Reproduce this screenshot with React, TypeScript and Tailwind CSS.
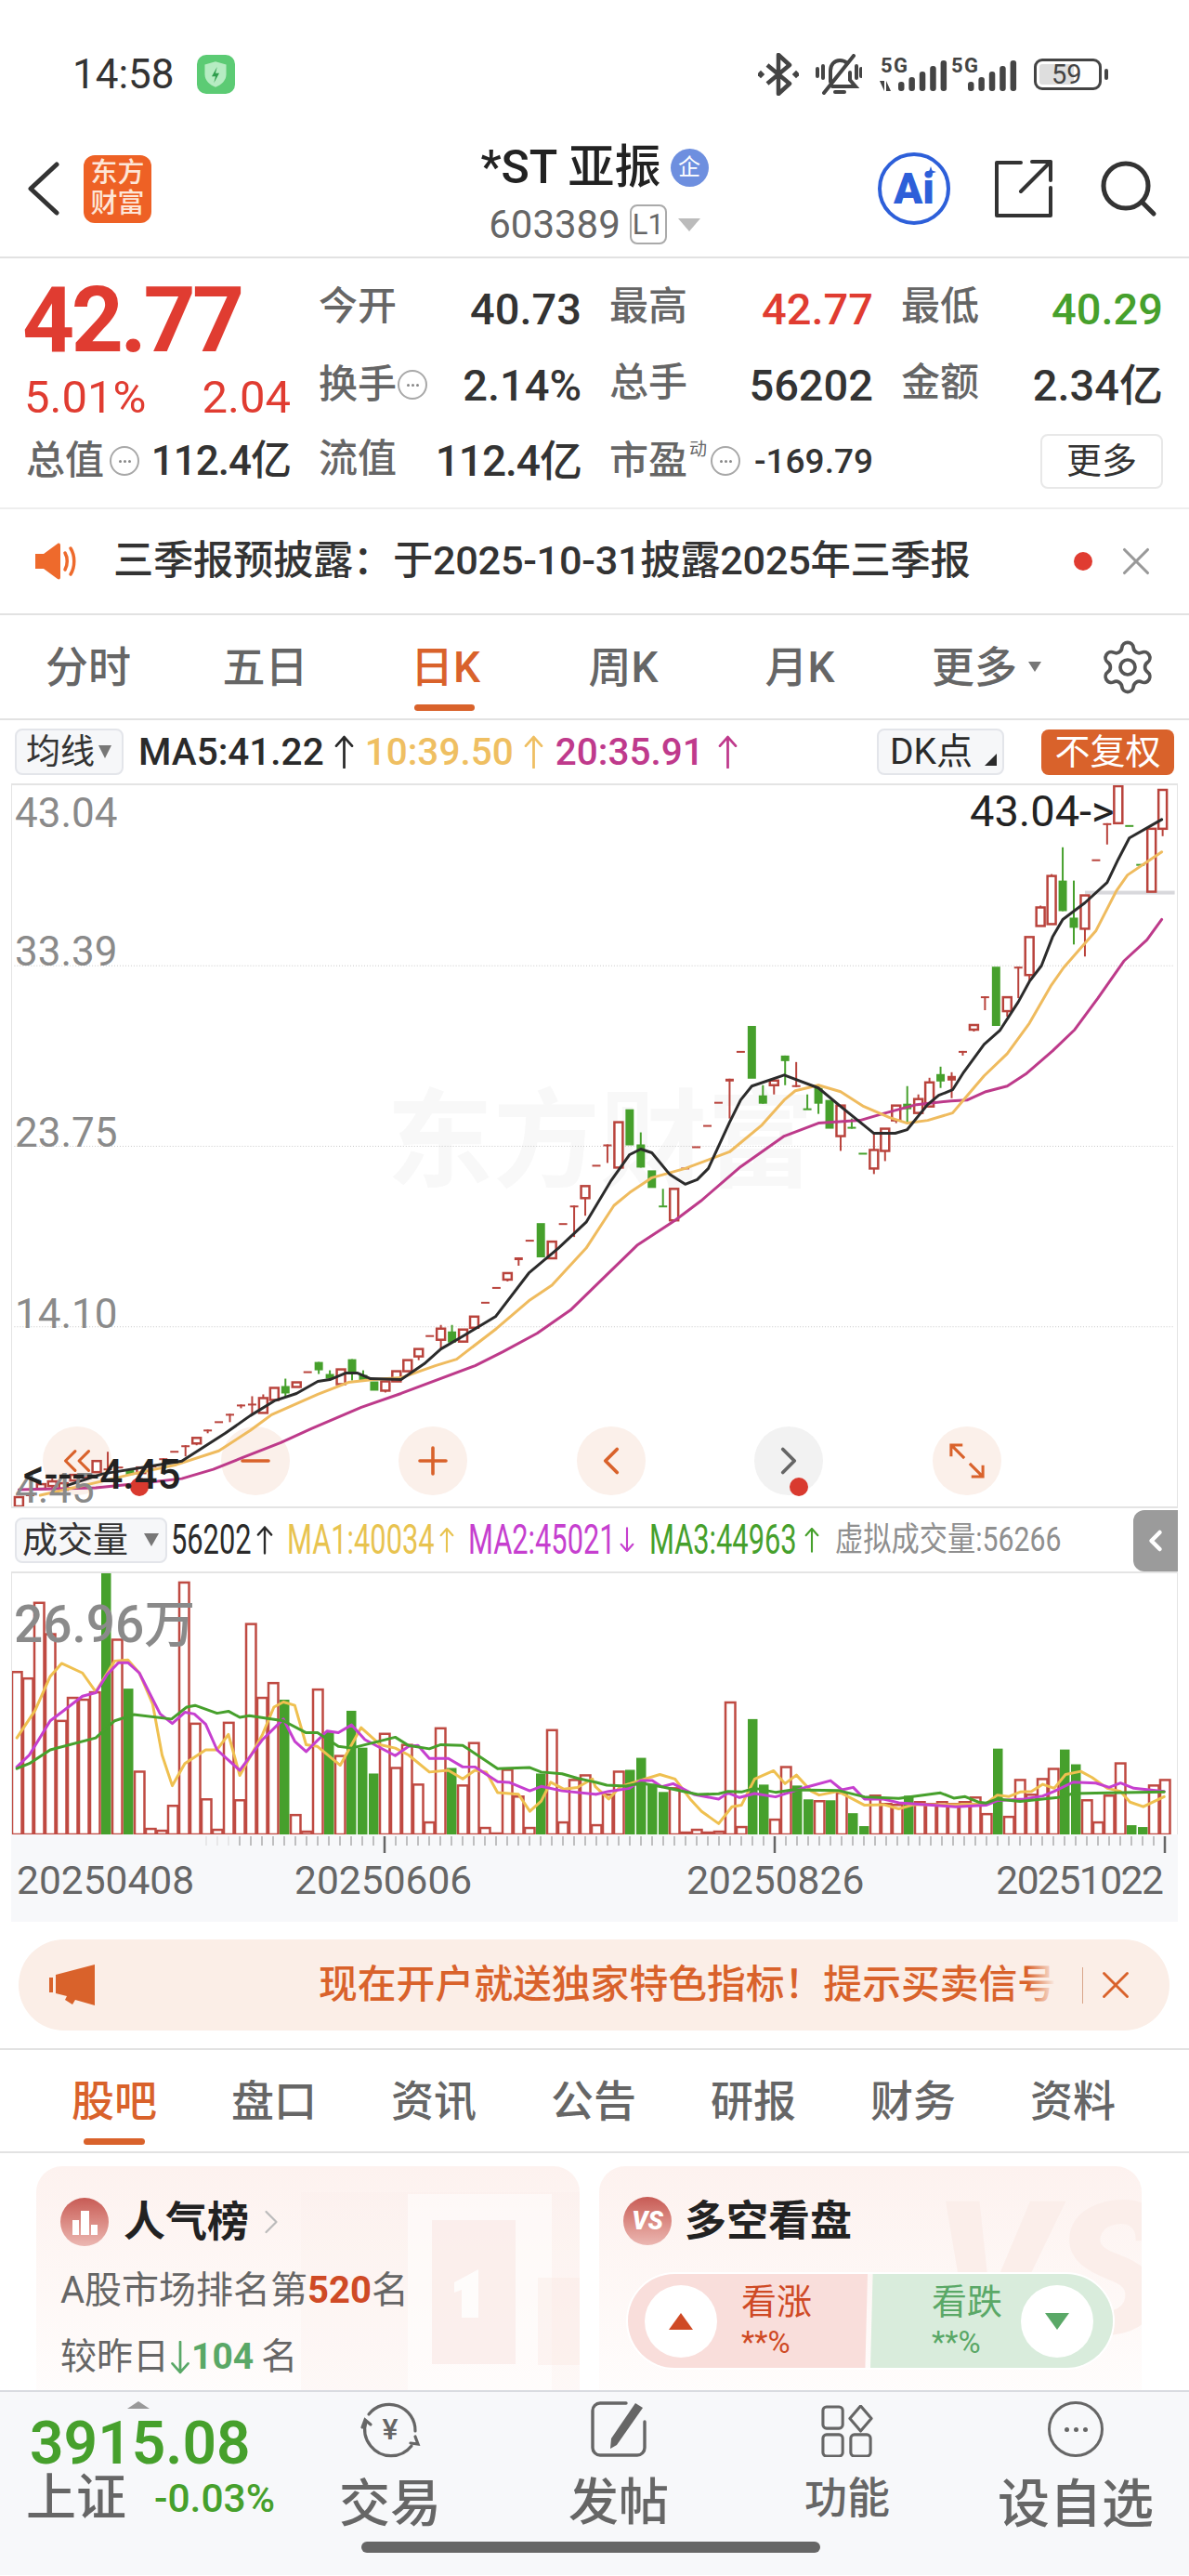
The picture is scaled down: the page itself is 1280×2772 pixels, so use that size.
import React from 'react'
import { ChevronLeft, ChevronRight, ChevronsLeft, Minus, Plus, Search, Settings, X } from 'lucide-react'

type Pt = [number, number]
// kind, body top, body bottom, wick top, wick bottom
type Candle = ['r' | 'R' | 'g', number, number, number?, number?]

const RED = '#b9433c'
const GREEN = '#46a02c'

const candles: Candle[] = [
  ['r', 1612, 1622], ['R', 1609, 1611, 1609, 1618], ['r', 1598, 1603], ['r', 1595, 1600, 1592, 1603],
  ['r', 1597, 1604], ['r', 1588, 1594], ['R', 1590, 1592], ['r', 1573, 1585],
  ['R', 1581, 1583, 1563, 1583], ['R', 1579, 1581], ['g', 1582, 1588], ['r', 1580, 1586],
  ['R', 1578, 1580], ['R', 1570, 1572, 1570, 1576], ['R', 1562, 1564], ['R', 1556, 1558, 1556, 1568],
  ['r', 1548, 1554, 1548, 1556], ['R', 1539, 1541, 1539, 1543], ['R', 1530, 1532], ['R', 1522, 1524, 1522, 1531],
  ['R', 1512, 1514, 1512, 1516], ['R', 1511, 1513, 1503, 1522], ['r', 1505, 1521, 1501, 1521], ['r', 1494, 1507],
  ['g', 1492, 1500, 1484, 1504], ['r', 1488, 1493], ['R', 1476, 1478], ['g', 1466, 1475, 1466, 1479],
  ['g', 1479, 1484, 1475, 1485], ['r', 1474, 1490], ['g', 1463, 1478, 1463, 1486], ['g', 1480, 1486, 1475, 1486],
  ['g', 1487, 1497], ['r', 1487, 1497, 1487, 1499], ['r', 1476, 1487], ['r', 1464, 1476],
  ['r', 1452, 1460, 1452, 1464], ['R', 1437, 1439], ['r', 1430, 1442, 1426, 1452], ['g', 1433, 1445, 1426, 1445],
  ['r', 1431, 1444], ['r', 1417, 1429], ['R', 1401, 1403], ['R', 1385, 1387],
  ['r', 1370, 1377, 1370, 1379], ['R', 1353, 1356, 1353, 1362], ['R', 1334, 1336], ['g', 1316, 1353],
  ['r', 1336, 1354], ['R', 1316, 1318], ['R', 1297, 1299, 1297, 1331], ['r', 1276, 1289, 1276, 1308],
  ['R', 1253, 1255], ['R', 1231, 1233, 1231, 1251], ['r', 1207, 1256], ['g', 1193, 1232],
  ['g', 1231, 1256, 1218, 1256], ['g', 1259, 1278], ['g', 1297, 1299, 1279, 1298], ['r', 1279, 1313],
  ['R', 1256, 1258], ['R', 1233, 1235], ['R', 1210, 1212], ['R', 1185, 1187],
  ['R', 1160, 1163, 1160, 1203], ['R', 1130, 1132], ['g', 1103, 1160], ['g', 1178, 1187, 1167, 1187],
  ['r', 1162, 1167, 1162, 1177], ['g', 1135, 1141, 1135, 1167], ['R', 1167, 1169, 1142, 1169], ['g', 1192, 1194, 1177, 1193],
  ['g', 1170, 1187, 1170, 1198], ['g', 1183, 1214], ['r', 1189, 1222, 1189, 1238], ['g', 1212, 1214, 1203, 1214],
  ['g', 1240, 1242], ['r', 1237, 1257, 1218, 1263], ['r', 1214, 1238, 1214, 1249], ['r', 1189, 1205, 1189, 1208],
  ['g', 1187, 1193, 1168, 1207], ['r', 1182, 1197, 1177, 1197], ['r', 1164, 1190, 1159, 1190], ['g', 1155, 1163, 1147, 1170],
  ['R', 1157, 1162, 1153, 1181], ['R', 1130, 1132, 1130, 1135], ['r', 1102, 1107, 1102, 1109], ['R', 1071, 1073, 1071, 1086],
  ['g', 1039, 1103], ['r', 1072, 1087, 1072, 1093], ['R', 1039, 1041, 1039, 1073], ['r', 1007, 1048, 1007, 1055],
  ['r', 975, 995, 973, 995], ['r', 941, 993, 939, 993], ['g', 946, 979, 910, 979], ['g', 986, 997, 946, 1015],
  ['r', 962, 998, 962, 1028], ['R', 923, 925], ['R', 884, 886, 884, 907], ['r', 844, 884],
  ['g', 886, 888], ['g', 928, 930], ['r', 890, 958], ['r', 848, 890, 848, 898],
]

const ma5: Pt[] = [[67, 1600], [107, 1587], [193, 1573], [240, 1543], [267, 1524], [293, 1508], [317, 1500], [340, 1487], [353, 1485], [370, 1478], [383, 1478], [397, 1484], [430, 1485], [455, 1468], [473, 1452], [497, 1438], [532, 1417], [568, 1370], [600, 1343], [630, 1315], [657, 1270], [677, 1242], [689, 1236], [701, 1240], [720, 1263], [737, 1274], [750, 1269], [762, 1257], [785, 1207], [797, 1183], [809, 1168], [844, 1156], [881, 1170], [905, 1190], [941, 1219], [964, 1219], [977, 1215], [999, 1188], [1011, 1178], [1026, 1172], [1038, 1153], [1060, 1123], [1077, 1108], [1097, 1077], [1109, 1055], [1122, 1038], [1134, 1007], [1145, 988], [1169, 970], [1193, 948], [1205, 923], [1217, 900], [1252, 880]]
const ma10: Pt[] = [[40, 1610], [93, 1598], [140, 1587], [187, 1577], [233, 1562], [267, 1540], [290, 1523], [340, 1501], [373, 1488], [400, 1485], [430, 1483], [467, 1470], [490, 1463], [533, 1430], [568, 1400], [593, 1383], [630, 1343], [660, 1297], [677, 1283], [701, 1267], [737, 1257], [785, 1239], [820, 1210], [844, 1183], [856, 1173], [881, 1167], [905, 1174], [930, 1190], [958, 1202], [977, 1208], [999, 1205], [1026, 1197], [1042, 1178], [1060, 1157], [1085, 1133], [1109, 1100], [1132, 1060], [1146, 1040], [1181, 1000], [1203, 957], [1215, 940], [1252, 915]]
const ma20: Pt[] = [[17, 1604], [100, 1602], [140, 1598], [193, 1592], [227, 1582], [257, 1570], [300, 1553], [333, 1538], [387, 1515], [430, 1500], [510, 1470], [540, 1455], [577, 1435], [613, 1410], [647, 1377], [685, 1340], [726, 1313], [754, 1292], [797, 1255], [844, 1222], [881, 1208], [926, 1205], [950, 1198], [987, 1188], [1024, 1184], [1042, 1183], [1062, 1174], [1085, 1168], [1105, 1155], [1134, 1130], [1158, 1107], [1183, 1073], [1211, 1033], [1236, 1010], [1252, 988]]

// volume per day: height in px, green days are negative
const volumes = [176, 169, 251, 217, 123, 148, 146, 154, -283, 211, -158, 68, 6, 4, 31, 273, 120, 38, 5, 121, 37, 228, 148, 164, -146, 21, 3, 157, -111, 85, -134, -94, -66, 109, 72, 97, 54, 13, 115, -72, 53, 99, 7, 1, 70, 41, 7, -66, 113, 13, 59, 64, 10, 43, 68, -70, -83, -55, -46, 50, 2, 5, 2, 3, 143, 8, -125, -54, 16, 73, -53, -38, 36, -37, 45, -23, -9, 42, 33, 32, -42, 35, 33, 35, 33, 35, 40, 22, -93, 19, 59, 43, 60, 71, -92, -76, 37, 13, 42, 77, -10, -8, 53, 59]

// moving averages were read on two sample grids, one per half of the panel
const leftHalf = (s: Pt[]): Pt[] => s.map(([x, y]) => [x / 2.45, 1500 + y / 2.7])
const rightHalf = (s: Pt[]): Pt[] => s.map(([x, y]) => [640 + x / 2.45, 1600 + y / 3])

const ma1 = [...leftHalf([[42, 1000], [90, 920], [130, 820], [160, 782], [215, 810], [250, 865], [300, 775], [335, 772], [365, 810], [400, 900], [425, 1050], [452, 1140], [485, 1075], [540, 1035], [570, 1035], [600, 990], [630, 1110], [690, 990], [720, 910], [745, 895], [775, 905], [805, 1020], [835, 1025], [895, 1080], [950, 970], [1000, 1020], [1040, 1030], [1075, 1050], [1130, 1100], [1180, 1095], [1218, 1120], [1250, 1095], [1280, 1100], [1310, 1160], [1365, 1165], [1395, 1215], [1425, 1185], [1450, 1130], [1485, 1150], [1520, 1145], [1560, 1120]]), ...rightHalf([[0, 970], [35, 1010], [65, 970], [130, 945], [170, 930], [210, 945], [250, 1010], [280, 1050], [325, 1090], [360, 1035], [385, 1030], [420, 945], [470, 918], [500, 960], [530, 932], [570, 985], [590, 997], [640, 985], [710, 1030], [760, 1028], [800, 1042], [840, 1028], [950, 1028], [1030, 1025], [1060, 997], [1090, 1002], [1120, 987], [1150, 985], [1180, 962], [1210, 975], [1240, 930], [1280, 920], [1310, 940], [1350, 975], [1385, 985], [1410, 1020], [1445, 1035], [1500, 1002]])]
const ma2 = [...leftHalf([[42, 1085], [75, 1050], [130, 950], [160, 925], [215, 878], [250, 868], [280, 815], [310, 780], [335, 780], [365, 810], [420, 930], [452, 958], [485, 925], [510, 930], [540, 960], [570, 1035], [630, 1095], [690, 1005], [745, 945], [775, 1010], [805, 1040], [860, 980], [890, 985], [925, 962], [960, 1005], [1040, 1052], [1075, 1025], [1100, 1022], [1130, 1060], [1180, 1060], [1218, 1085], [1250, 1085], [1310, 1128], [1340, 1130], [1395, 1155], [1425, 1142], [1480, 1155], [1568, 1165]]), ...rightHalf([[0, 995], [35, 985], [90, 975], [120, 950], [150, 950], [175, 970], [205, 960], [260, 995], [325, 1010], [350, 990], [380, 1005], [420, 992], [475, 1003], [520, 985], [560, 970], [620, 950], [650, 980], [680, 972], [710, 1010], [760, 1010], [800, 1022], [950, 1035], [1030, 1030], [1060, 1015], [1130, 1010], [1180, 1000], [1210, 985], [1260, 955], [1320, 958], [1355, 972], [1385, 958], [1420, 975], [1500, 985]])]
const ma3 = [...leftHalf([[42, 1090], [75, 1075], [130, 1035], [250, 1000], [300, 950], [350, 932], [450, 945], [490, 910], [512, 905], [570, 928], [600, 922], [630, 940], [655, 935], [745, 950], [805, 985], [835, 985], [890, 1025], [925, 1030], [1040, 998], [1075, 1022], [1130, 1032], [1160, 1020], [1218, 1022], [1270, 1060], [1310, 1090], [1395, 1087], [1425, 1100], [1480, 1105], [1520, 1118], [1568, 1130]]), ...rightHalf([[0, 955], [30, 965], [80, 968], [120, 958], [175, 970], [270, 995], [325, 993], [350, 985], [385, 987], [420, 975], [475, 988], [520, 980], [640, 982], [710, 1003], [800, 1008], [910, 990], [945, 1007], [975, 1002], [1010, 1020], [1030, 1023], [1060, 1010], [1120, 1018], [1220, 1005], [1260, 992], [1350, 990], [1500, 987]])]

const toPoints = (pts: Pt[]) => pts.map(([x, y]) => `${x},${y}`).join(' ')
const candleX = (i: number) => 17 + 12 * i

function Line({ pts, color, width = 3 }: { pts: Pt[]; color: string; width?: number }) {
  return <polyline points={toPoints(pts)} fill="none" stroke={color} strokeWidth={width} strokeLinejoin="round" strokeLinecap="round" />
}

function Dots() {
  return (
    <span className="inline-flex h-[32px] w-[32px] shrink-0 items-center justify-center gap-[2px] rounded-full border-2 border-[#a8a8a8]">
      <i className="h-[3px] w-[3px] rounded-full bg-[#888]" />
      <i className="h-[3px] w-[3px] rounded-full bg-[#888]" />
      <i className="h-[3px] w-[3px] rounded-full bg-[#888]" />
    </span>
  )
}

function Arrow({ color, down = false, className }: { color: string; down?: boolean; className: string }) {
  return (
    <svg viewBox="0 0 20 34" className={className} fill="none" stroke={color} strokeWidth="2.6" strokeLinecap="round" strokeLinejoin="round">
      {down ? <path d="M10 1v31M2 23l8 9 8-9" /> : <path d="M10 33V2M2 11l8-9 8 9" />}
    </svg>
  )
}

function Signal({ arrows = false }: { arrows?: boolean }) {
  const ox = arrows ? 7 : 4
  return (
    <svg viewBox="0 0 74 40" className="h-[40px] w-[74px] overflow-visible" fill="#444">
      <text x={arrows ? 2 : 0} y="18" fontSize="22" fontWeight="700" letterSpacing="1.500" fontFamily="Roboto, sans-serif">5G</text>
      {arrows && <path d="M1 27h5v11zM8 38V27l5 11z" />}
      {[0, 1, 2, 3, 4].map((b) => {
        const h = [10, 15, 21, 27, 33][b]
        return <rect key={b} x={ox + 14 + b * 11.4} y={38 - h} width="6.5" height={h} rx="3" />
      })}
    </svg>
  )
}

function StatusBar() {
  return (
    <div className="flex h-[130px] items-center pl-[78px] pr-[87px] pt-[30px] text-[#333]">
      <span className="text-[44px] leading-none">14:58</span>
      <span className="ml-[24px] flex h-[42px] w-[41px] items-center justify-center rounded-[10px] bg-[#5ccb74]">
        <svg viewBox="0 0 24 26" className="h-[30px] w-[28px]">
          <path d="M12 1l10 3v9c0 6-5 10-10 12C7 23 2 19 2 13V4z" fill="#b6ecc2" />
          <path d="M13.5 6l-5 9h3.5l-1.5 6 5-9h-3.500z" fill="#2f9e4d" />
        </svg>
      </span>
      <div className="ml-auto flex items-center">
        <svg viewBox="0 0 44 46" className="h-[46px] w-[44px]" fill="none" stroke="#444" strokeWidth="4.500" strokeLinejoin="round">
          <path d="M10 13l24 20-12 11V2l12 11-24 20" />
          <rect x="0" y="20" width="6" height="6" fill="#444" stroke="none" transform="rotate(45 3 23)" />
          <rect x="38" y="20" width="6" height="6" fill="#444" stroke="none" transform="rotate(45 41 23)" />
        </svg>
        <svg viewBox="0 0 50 44" className="ml-[18px] h-[44px] w-[50px]" fill="none" stroke="#444" strokeWidth="4" strokeLinecap="round">
          <path d="M16 30V18c0-6 4-11 10-11 3 0 6 1 8 3M37 20v8l6 7H18M21 41h10" />
          <path d="M41 2L9 42M2 16v8M8 13v13M44 13v13M49 16v8" />
        </svg>
        <div className="ml-[18px]"><Signal arrows /></div>
        <div className="ml-[4px] w-[70px]"><Signal /></div>
        <div className="relative ml-[19px] flex h-[34px] w-[73px] items-center rounded-[9px] border-[3px] border-[#444] p-[3px]">
          <span className="flex h-full w-[60%] items-center rounded-[3px] bg-[#dedede]" />
          <span className="absolute left-[16px] text-[29px] leading-none text-[#444]">59</span>
        </div>
        <span className="ml-[3px] h-[12px] w-[4px] rounded-full bg-[#444]" />
      </div>
    </div>
  )
}

function Header() {
  return (
    <div className="grid h-[148px] grid-cols-[1fr_auto_1fr] items-center border-b-2 border-[#e2e2e2] px-[29px]">
      <div className="flex items-center">
        <svg viewBox="0 0 35 58" className="h-[58px] w-[35px]" fill="none" stroke="#333" strokeWidth="5" strokeLinecap="round" strokeLinejoin="round">
          <path d="M32 3L4 29l28 26" />
        </svg>
        <div className="ml-[26px] flex h-[73px] w-[73px] flex-col items-center justify-center rounded-[12px] bg-[#ee6125] text-[29px] font-medium leading-[33px] text-[#fde6d8]">
          <span>东方</span>
          <span>财富</span>
        </div>
      </div>
      <div className="flex flex-col items-center pt-[12px]">
        <div className="flex items-center">
          <span className="whitespace-nowrap text-[50px] font-medium leading-[50px] text-[#222]">*ST 亚振</span>
          <span className="ml-[10px] flex h-[41px] w-[41px] items-center justify-center rounded-full bg-[#6e8fdf] text-[24px] leading-none text-white">企</span>
        </div>
        <div className="mt-[15px] flex items-center">
          <span className="text-[42px] leading-none text-[#666]">603389</span>
          <span className="ml-[10px] flex h-[43px] w-[40px] items-center justify-center rounded-[8px] border-2 border-[#aaa] text-[31px] leading-none text-[#666]">L1</span>
          <span className="ml-[12px] h-0 w-0 border-x-[12px] border-t-[14px] border-x-transparent border-t-[#bbb]" />
        </div>
      </div>
      <div className="flex items-center justify-end">
        <div className="relative flex h-[78px] w-[78px] items-center justify-center rounded-full border-[4px] border-[#2d5fd9] text-[46px] font-black leading-none text-[#2d5fd9]">
          <span>Ai</span>
          <svg viewBox="0 0 12 12" className="absolute right-[11px] top-[11px] h-[12px] w-[12px]" fill="#2d5fd9"><path d="M6 0l1.500 4.500L12 6 7.500 7.500 6 12 4.500 7.500 0 6l4.500-1.500z" /></svg>
        </div>
        <svg viewBox="0 0 62 62" className="ml-[48px] h-[62px] w-[62px]" fill="none" stroke="#333" strokeWidth="4" strokeLinecap="round" strokeLinejoin="round">
          <path d="M28 3H2v57h58V30M28 34L60 2M40 2h20v20" />
        </svg>
        <Search className="ml-[46px] h-[72px] w-[72px] text-[#333]" strokeWidth={1.7} />
      </div>
    </div>
  )
}

function Label({ children }: { children: React.ReactNode }) {
  return <span className="whitespace-nowrap text-[42px] font-medium leading-none text-[#666]">{children}</span>
}

function Value({ children, color = 'text-[#333]' }: { children: React.ReactNode; color?: string }) {
  return <span className={`whitespace-nowrap text-[47px] font-medium leading-none ${color}`}>{children}</span>
}

function Quote() {
  return (
    <div className="grid h-[270px] grid-cols-[285px_283px_284px_282px] grid-rows-[82px_82px_82px] items-center gap-x-[30px] border-b-2 border-[#eee] pl-[28px] pt-[13px]">
      <span className="ml-[-4px] mt-[26px] text-[98px] font-bold leading-none tracking-[-3.500px] text-[#e03c31]">42.77</span>
      <div className="flex justify-between"><Label>今开</Label><Value>40.73</Value></div>
      <div className="flex justify-between"><Label>最高</Label><Value color="text-[#e03c31]">42.77</Value></div>
      <div className="flex justify-between"><Label>最低</Label><Value color="text-[#46a02c]">40.29</Value></div>

      <div className="ml-[-2px] mt-[26px] flex justify-between text-[49px] leading-none text-[#e03c31]"><span>5.01%</span><span>2.04</span></div>
      <div className="flex items-center justify-between">
        <span className="flex items-center gap-[1px]"><Label>换手</Label><Dots /></span>
        <Value>2.14%</Value>
      </div>
      <div className="flex justify-between"><Label>总手</Label><Value>56202</Value></div>
      <div className="flex justify-between"><Label>金额</Label><Value>2.34亿</Value></div>

      <div className="flex items-center justify-between">
        <span className="flex items-center gap-[6px]"><Label>总值</Label><Dots /></span>
        <span className="whitespace-nowrap text-[44px] font-medium leading-none tracking-[-1px] text-[#333]">112.4亿</span>
      </div>
      <div className="flex justify-between"><Label>流值</Label><span className="whitespace-nowrap text-[46px] font-medium leading-none tracking-[-1px] text-[#333]">112.4亿</span></div>
      <div className="flex items-center">
        <Label>市盈</Label>
        <span className="mb-[26px] ml-[2px] text-[19px] leading-none text-[#666]">动</span>
        <span className="ml-[4px]"><Dots /></span>
        <span className="ml-auto text-[37px] font-medium leading-none text-[#333]">-169.79</span>
      </div>
      <div className="flex justify-end">
        <span className="flex h-[59px] w-[132px] items-center justify-center rounded-[8px] border-2 border-[#e8e8e8] text-[38px] leading-none text-[#333]">更多</span>
      </div>
    </div>
  )
}

function Notice() {
  return (
    <div className="flex h-[114px] items-center border-b-2 border-[#e2e2e2] pl-[38px] pr-[32px]">
      <svg viewBox="0 0 46 40" className="h-[40px] w-[46px]">
        <path d="M0 12h9L24 1c2-1 3 0 3 2v34c0 2-1 3-3 2L9 28H0z" fill="#ee6a2c" />
        <path d="M32 11c3 5 3 13 0 18M38 6c5 8 5 20 0 28" fill="none" stroke="#ee6a2c" strokeWidth="3.500" strokeLinecap="round" />
      </svg>
      <span className="ml-[38px] whitespace-nowrap text-[43.300px] font-medium leading-none tracking-[-0.3px] text-[#333]">三季报预披露：于2025-10-31披露2025年三季报</span>
      <span className="ml-auto h-[20px] w-[20px] rounded-full bg-[#e03c31]" />
      <X className="ml-[22px] h-[50px] w-[50px] text-[#999]" strokeWidth={1.500} />
    </div>
  )
}

function PeriodTabs() {
  return (
    <div className="flex h-[113px] items-center border-b-2 border-[#e2e2e2]">
      <div className="grid grid-cols-[190px_191px_197px_186px_194px_208px] text-center text-[46px] font-medium leading-none text-[#666]">
        <span>分时</span>
        <span>五日</span>
        <div className="relative text-[#d9622b]">
          日K
          <span className="absolute bottom-[-24px] left-[65px] h-[7px] w-[65px] rounded-full bg-[#d9622b]" />
        </div>
        <span>周K</span>
        <span>月K</span>
        <div className="flex justify-center">
          更多
          <span className="ml-[12px] mt-[17px] h-0 w-0 border-x-[7px] border-t-[11px] border-x-transparent border-t-[#777]" />
        </div>
      </div>
      <Settings className="ml-[16px] h-[64px] w-[64px] text-[#555]" strokeWidth={1.400} />
    </div>
  )
}

function IndicatorRow() {
  return (
    <div className="flex h-[68px] items-center pl-[16px] pr-[16px] text-[40.500px] leading-none">
      <div className="flex h-[50px] w-[117px] items-center rounded-[8px] border-2 border-[#e3e5ea] bg-[#f6f7f9] pl-[10px] text-[37px] text-[#333]">
        均线
        <span className="ml-[4px] h-0 w-0 border-x-[7px] border-t-[14px] border-x-transparent border-t-[#777]" />
      </div>
      <span className="ml-[16px] font-medium text-[#2a2a2a]">MA5:41.22</span>
      <Arrow color="#2a2a2a" className="ml-[10px] h-[36px] w-[23px]" />
      <span className="ml-[11px] font-medium text-[#efbf62]">10:39.50</span>
      <Arrow color="#efbf62" className="ml-[10px] h-[36px] w-[23px]" />
      <span className="ml-[12px] font-medium text-[#bf3a8c]">20:35.91</span>
      <Arrow color="#bf3a8c" className="ml-[14px] h-[36px] w-[23px]" />
      <div className="relative ml-auto flex h-[50px] w-[137px] items-center rounded-[8px] border-2 border-[#e3e5ea] bg-[#f6f7f9] pl-[12px] text-[39px] text-[#2a2a2a]">
        DK点
        <span className="absolute bottom-[8px] right-[6px] h-0 w-0 border-b-[13px] border-l-[13px] border-b-[#2a2a2a] border-l-transparent" />
      </div>
      <div className="ml-[40px] flex h-[49px] w-[143px] items-center justify-center rounded-[8px] bg-[#d9622b] text-[38px] text-white">不复权</div>
    </div>
  )
}

function CandlePanel() {
  return (
    <svg viewBox="12 843 1254 779" className="absolute inset-0 h-full w-full">
      {[1038, 1233, 1428].map((y) => (
        <line key={y} x1="12" x2="1266" y1={y} y2={y} stroke="#c8c8c8" strokeWidth="1" strokeDasharray="1 2" />
      ))}
      <rect x="1169" y="957" width="97" height="4" fill="#d8d8dc" />
      {candles.map(([kind, top, bottom, wickTop, wickBottom], i) => {
        const x = candleX(i)
        const color = kind === 'g' ? GREEN : RED
        return (
          <g key={i}>
            {wickTop !== undefined && <line x1={x} x2={x} y1={wickTop} y2={wickBottom} stroke={color} strokeWidth="2" />}
            {kind === 'r' ? (
              <rect x={x - 4.5} y={top} width="9" height={bottom - top} fill="#fff" stroke={color} strokeWidth="2.500" />
            ) : (
              <rect x={x - 4.5} y={top} width="9" height={bottom - top} fill={color} />
            )}
          </g>
        )
      })}
      <Line pts={ma20} color="#bd3a8a" />
      <Line pts={ma10} color="#efbb5e" />
      <Line pts={ma5} color="#2b2b2b" />
    </svg>
  )
}

function ChartControls() {
  const warm = 'flex h-[74px] w-[74px] items-center justify-center rounded-full bg-[#fbf0ea] text-[#d9622b]'
  return (
    <div className="absolute bottom-[12px] left-[33px] flex gap-[117.500px]">
      <span className={warm}><ChevronsLeft className="h-[50px] w-[50px]" strokeWidth={1.500} /></span>
      <span className={warm}><Minus className="h-[48px] w-[48px]" strokeWidth={1.800} /></span>
      <span className={warm}><Plus className="h-[48px] w-[48px]" strokeWidth={1.800} /></span>
      <span className={warm}><ChevronLeft className="h-[50px] w-[50px]" strokeWidth={1.800} /></span>
      <span className="relative flex h-[74px] w-[74px] items-center justify-center rounded-full bg-[#f2f2f2] text-[#666]">
        <ChevronRight className="h-[50px] w-[50px]" strokeWidth={1.800} />
        <span className="absolute bottom-[-1px] left-[38px] h-[20px] w-[20px] rounded-full bg-[#d93a2f]" />
      </span>
      <span className={warm}>
        <svg viewBox="0 0 40 40" className="h-[38px] w-[38px]" fill="none" stroke="#d9622b" strokeWidth="3.200">
          <path d="M2 15V2h13M2 2l15 15M38 25v13H25M38 38L23 23" />
        </svg>
      </span>
    </div>
  )
}

function MainChart() {
  const axis = 'absolute left-[3px] text-[44px] leading-none text-[#8a8a8a]'
  return (
    <div className="relative h-[780px] border-x border-b-2 border-t-2 border-[#e4e4e4]">
      <span className="absolute left-[403px] top-[326px] whitespace-nowrap text-[115px] font-bold leading-none text-[#f8f8f8]">东方财富</span>
      <ChartControls />
      <CandlePanel />
      <span className={`${axis} top-[8px]`}>43.04</span>
      <span className={`${axis} top-[157px]`}>33.39</span>
      <span className={`${axis} top-[352px]`}>23.75</span>
      <span className={`${axis} top-[547px]`}>14.10</span>
      <span className={`${axis} top-[735px]`}>4.45</span>
      <span className="absolute left-[1031px] top-[4px] whitespace-nowrap text-[47px] leading-none text-[#222]">43.04-&gt;</span>
      <span className="absolute left-[127px] top-[745px] h-[20px] w-[20px] rounded-full bg-[#d93a2f]" />
      <span className="absolute left-[12px] top-[720px] whitespace-nowrap text-[44px] font-medium leading-none text-[#222]">&lt;----4.45</span>
    </div>
  )
}

function Squeezed({ className, children }: { className: string; children: React.ReactNode }) {
  return (
    <span className={`block shrink-0 whitespace-nowrap ${className}`}>
      <span className="inline-block origin-left scale-x-[0.7]">{children}</span>
    </span>
  )
}

function VolumeRow() {
  return (
    <div className="relative flex h-[68px] items-center pl-[16px] text-[44px] leading-none">
      <div className="flex h-[49px] w-[164px] shrink-0 items-center rounded-[8px] border-2 border-[#e3e5ea] bg-[#f6f7f9] pl-[6px] text-[38px] text-[#333]">
        成交量
        <span className="ml-[17px] h-0 w-0 border-x-[8px] border-t-[14px] border-x-transparent border-t-[#777]" />
      </div>
      <Squeezed className="ml-[4px] w-[85px] text-[#2a2a2a]">56202</Squeezed>
      <Arrow color="#2a2a2a" className="ml-[7px] h-[36px] w-[18px]" />
      <Squeezed className="ml-[15px] w-[156px] text-[#e8c34f]">MA1:40034</Squeezed>
      <Arrow color="#e8c34f" className="ml-[8px] h-[36px] w-[16px]" />
      <Squeezed className="ml-[15px] w-[152px] text-[#c63fcf]">MA2:45021</Squeezed>
      <Arrow color="#c63fcf" down className="ml-[11px] h-[36px] w-[16px]" />
      <Squeezed className="ml-[16px] w-[160px] text-[#46a02c]">MA3:44963</Squeezed>
      <Arrow color="#46a02c" className="ml-[7px] h-[36px] w-[16px]" />
      <span className="ml-[17px] whitespace-nowrap text-[36px] text-[#8f8f8f]">
        <span className="inline-block origin-left scale-x-[0.84]">虚拟成交量:56266</span>
      </span>
      <div className="absolute right-[12px] top-[2px] flex h-[66px] w-[48px] items-center justify-center rounded-l-[12px] bg-[#9b9b9b]">
        <ChevronLeft className="h-[44px] w-[36px] text-white" strokeWidth={3} />
      </div>
    </div>
  )
}

function VolumePanel() {
  return (
    <div className="relative h-[283px] border-x border-t-2 border-[#e4e4e4]">
      <svg viewBox="12 1692 1254 283" preserveAspectRatio="none" className="absolute inset-0 h-full w-full">
        {volumes.map((v, i) => {
          const x = candleX(i)
          const h = Math.abs(v)
          return v < 0 ? (
            <rect key={i} x={x - 5} y={1975 - h} width="10.500" height={h} fill={GREEN} />
          ) : (
            <rect key={i} x={x - 5} y={1975 - h} width="10.500" height={h} fill="#fff" stroke="#bf4a42" strokeWidth="2.500" />
          )
        })}
        <Line pts={ma1} color="#efc050" />
        <Line pts={ma2} color="#c63fcf" />
        <Line pts={ma3} color="#46a02c" />
      </svg>
      <span className="absolute left-[2px] top-[28px] whitespace-nowrap text-[55px] font-medium leading-none text-[#8a8a8a]">26.96万</span>
    </div>
  )
}

function DateAxis() {
  const ticks = Array.from({ length: 87 }, (_, k) => 17 + k)
  return (
    <div className="relative mx-[12px] h-[94px] bg-[#f7f8fa] text-[42.500px] leading-none text-[#666]">
      <svg viewBox="12 1975 1254 20" className="absolute left-0 top-0 h-[20px] w-full">
        {ticks.map((i) => {
          const major = i === 33 || i === 68 || i === 103
          return <line key={i} x1={candleX(i)} x2={candleX(i)} y1="1977" y2={major ? 1995 : 1987} stroke={major ? '#666' : i < 20 ? '#ddd' : '#999'} strokeWidth={major ? 2.500 : 1.200} />
        })}
      </svg>
      <div className="flex pl-[6px] pt-[29px]">
        <span>20250408</span>
        <span className="ml-[108px]">20250606</span>
        <span className="ml-[231px]">20250826</span>
        <span className="ml-[142px] tracking-[-1.500px]">20251022</span>
      </div>
    </div>
  )
}

function AdBanner() {
  return (
    <div className="px-[20px] pb-[19px] pt-[19px]">
      <div className="relative flex h-[98px] w-[1239px] items-center rounded-full bg-[#fbeee7] pl-[33px]">
        <svg viewBox="0 0 50 44" className="h-[44px] w-[50px]" fill="#d9622b">
          <path d="M0 14h4v16H0zM7 11l42-11v44L28 38l-3 5-8-5 2-4-12-3z" />
        </svg>
        <span className="ml-[240px] whitespace-nowrap text-[41.800px] font-medium leading-none text-[#d9622b]">现在开户就送独家特色指标！提示买卖信号</span>
        <span className="absolute left-[1086px] top-[18px] h-[60px] w-[30px] bg-linear-to-r from-transparent to-[#fbeee7]" />
        <span className="absolute left-[1145px] top-[30px] h-[39px] w-px bg-[#d9a58a]" />
        <X className="absolute left-[1156px] top-[24px] h-[50px] w-[50px] text-[#d9622b]" strokeWidth={1.400} />
      </div>
    </div>
  )
}

function ContentTabs() {
  const tabs = ['盘口', '资讯', '公告', '研报', '财务', '资料']
  return (
    <div className="grid h-[113px] grid-cols-[172px_172px_172px_172px_172px_172px_172px] items-center border-y-2 border-[#e2e2e2] pl-[37px] text-center text-[46px] font-medium leading-none text-[#666]">
      <div className="relative text-[#d9622b]">
        股吧
        <span className="absolute bottom-[-24px] left-[53px] h-[7px] w-[66px] rounded-full bg-[#d9622b]" />
      </div>
      {tabs.map((t) => <span key={t}>{t}</span>)}
    </div>
  )
}

function Cards() {
  return (
    <div className="flex h-[255px] gap-[21px] overflow-hidden pl-[39px] pt-[14px]">
      <div className="relative h-[300px] w-[585px] shrink-0 overflow-hidden rounded-[28px] bg-linear-to-b from-[#fdf2ef] to-white">
        <svg viewBox="0 0 585 300" className="absolute inset-0 h-full w-full">
          <rect x="285" y="28" width="300" height="272" fill="#fbeeea" opacity="0.3" />
          <rect x="400" y="30" width="155" height="240" fill="#fff" opacity="0.5" />
          <rect x="426" y="58" width="90" height="155" fill="#f8e4e0" opacity="0.5" />
          <rect x="540" y="120" width="45" height="94" fill="#f8e4e0" opacity="0.35" />
          <path d="M450 125l26-14v52h-18v-30l-8 3z" fill="#fff" opacity="0.8" />
        </svg>
        <div className="relative flex items-center pl-[26px] pt-[33px]">
          <span className="flex h-[52px] w-[52px] items-end justify-center gap-[2px] rounded-full bg-linear-to-b from-[#c75b55] to-[#ebb7b2] pb-[12px]">
            <i className="h-[16px] w-[7px] bg-white" />
            <i className="h-[26px] w-[9px] bg-white" />
            <i className="h-[11px] w-[7px] bg-white" />
          </span>
          <span className="ml-[16px] whitespace-nowrap text-[45px] font-bold leading-none text-[#222]">人气榜</span>
          <ChevronRight className="ml-[2px] h-[54px] w-[44px] text-[#bbb]" strokeWidth={1.200} />
        </div>
        <div className="relative mt-[27px] whitespace-nowrap pl-[26px] text-[40px] leading-none text-[#666]">
          A股市场排名第<b className="font-bold text-[#cf4a25]">520</b>名
        </div>
        <div className="relative mt-[32px] flex items-center whitespace-nowrap pl-[26px] text-[39px] leading-none text-[#666]">
          较昨日
          <Arrow color="#5aa867" down className="h-[36px] w-[24px]" />
          <b className="font-bold text-[#5aa867]">104</b>
          <span className="ml-[8px]">名</span>
        </div>
      </div>
      <div className="relative h-[300px] w-[584px] shrink-0 overflow-hidden rounded-[28px] bg-linear-to-b from-[#fdf2ef] to-white">
        <span className="absolute left-[360px] top-[12px] text-[200px] font-black italic leading-none text-[#fbeeea]">VS</span>
        <div className="relative flex items-center pl-[26px] pt-[33px]">
          <span className="flex h-[52px] w-[52px] items-center justify-center rounded-full bg-linear-to-b from-[#c75b55] to-[#ebb7b2] text-[27px] font-black italic leading-none text-white">VS</span>
          <span className="ml-[14px] whitespace-nowrap text-[45px] font-bold leading-none text-[#222]">多空看盘</span>
        </div>
        <div className="relative ml-[31px] mt-[31px] flex h-[101px] w-[522px] overflow-hidden rounded-full ring-2 ring-white">
          <div className="flex w-[258px] items-center bg-[#f9dedb] pl-[18px] [clip-path:polygon(0_0,100%_0,99%_100%,0_100%)]">
            <span className="flex h-[78px] w-[78px] items-center justify-center rounded-full bg-white">
              <span className="h-0 w-0 border-x-[13px] border-b-[18px] border-x-transparent border-b-[#cf4a25]" />
            </span>
            <div className="ml-[26px] text-[#cf4a25]">
              <div className="text-[38px] leading-none">看涨</div>
              <div className="mt-[8px] text-[33px] leading-none">**%</div>
            </div>
          </div>
          <div className="ml-[3px] flex flex-1 items-center bg-[#d9ecdc] pl-[66px] text-[#5aa867] [clip-path:polygon(1%_0,100%_0,100%_100%,0_100%)]">
            <div>
              <div className="text-[38px] leading-none">看跌</div>
              <div className="mt-[8px] text-[33px] leading-none">**%</div>
            </div>
            <span className="ml-[20px] flex h-[78px] w-[78px] items-center justify-center rounded-full bg-white">
              <span className="h-0 w-0 border-x-[13px] border-t-[18px] border-x-transparent border-t-[#5aa867]" />
            </span>
          </div>
        </div>
      </div>
    </div>
  )
}

function BottomBar() {
  const item = 'flex flex-col items-center text-[#666] font-medium leading-none'
  return (
    <div className="relative flex h-[199px] border-t-2 border-[#d9dbe0] bg-[#f7f8fa]">
      <div className="w-[297px] shrink-0">
        <span className="absolute left-[137px] top-[10px] h-0 w-0 border-x-[12px] border-b-[8px] border-x-transparent border-b-[#999]" />
        <div className="pl-[32px] pt-[24px] text-[64px] font-semibold leading-none text-[#46a02c]">3915.08</div>
        <div className="flex items-center pl-[28px]">
          <span className="text-[54px] font-medium leading-none text-[#666]">上证</span>
          <span className="ml-[30px] text-[42.500px] font-medium leading-none text-[#46a02c]">-0.03%</span>
        </div>
      </div>
      <div className="grid flex-1 grid-cols-[246px_246px_246px_246px] pt-[10px]">
        <div className={item}>
          <svg viewBox="0 0 70 62" className="h-[62px] w-[70px]" fill="none" stroke="#666" strokeWidth="3.200" strokeLinecap="round">
            <path d="M12 14a28 28 0 0 1 50 18M58 48A28 28 0 0 1 14 48 28 28 0 0 1 9 22" />
            <path d="M62 38l3 8-8-1M5 28l3-8 6 5" />
            <text x="35" y="41" textAnchor="middle" fontSize="32" fill="#666" stroke="none" fontFamily="Roboto, sans-serif">¥</text>
          </svg>
          <span className="mt-[21px] text-[55px]">交易</span>
        </div>
        <div className={item}>
          <svg viewBox="0 0 60 60" className="h-[60px] w-[60px]" fill="none" stroke="#666" strokeWidth="3.400" strokeLinecap="round" strokeLinejoin="round">
            <path d="M38 2H10a8 8 0 0 0-8 8v40a8 8 0 0 0 8 8h40a8 8 0 0 0 8-8V22" />
            <path d="M22 40L48 2l8 5-28 40-7 4z" fill="#666" stroke="none" />
          </svg>
          <span className="mt-[23px] text-[54px]">发帖</span>
        </div>
        <div className={item}>
          <svg viewBox="0 0 58 58" className="mt-[4px] h-[56px] w-[58px]" fill="none" stroke="#666" strokeWidth="3.200" strokeLinejoin="round">
            <rect x="2" y="2" width="22" height="24" rx="4" />
            <path d="M44 1l12 14-12 14-12-14z" />
            <rect x="2" y="33" width="22" height="24" rx="4" />
            <rect x="33" y="33" width="22" height="24" rx="4" />
          </svg>
          <span className="mt-[21px] text-[46px]">功能</span>
        </div>
        <div className={item}>
          <span className="flex h-[60px] w-[60px] items-center justify-center gap-[5px] rounded-full border-[3px] border-[#666]">
            <i className="h-[5px] w-[5px] rounded-full bg-[#666]" />
            <i className="h-[5px] w-[5px] rounded-full bg-[#666]" />
            <i className="h-[5px] w-[5px] rounded-full bg-[#666]" />
          </span>
          <span className="mt-[23px] text-[56px]">设自选</span>
        </div>
      </div>
      <span className="absolute bottom-[24px] left-[389px] h-[12px] w-[494px] rounded-full bg-[#666]" />
    </div>
  )
}

export default function App() {
  return (
    <div className="h-[2772px] w-[1280px] overflow-hidden bg-white [font-family:Roboto,'Noto_Sans_CJK_SC',sans-serif]">
      <StatusBar />
      <Header />
      <Quote />
      <Notice />
      <PeriodTabs />
      <IndicatorRow />
      <div className="mx-[12px]"><MainChart /></div>
      <VolumeRow />
      <div className="mx-[12px]"><VolumePanel /></div>
      <DateAxis />
      <AdBanner />
      <ContentTabs />
      <Cards />
      <BottomBar />
    </div>
  )
}
